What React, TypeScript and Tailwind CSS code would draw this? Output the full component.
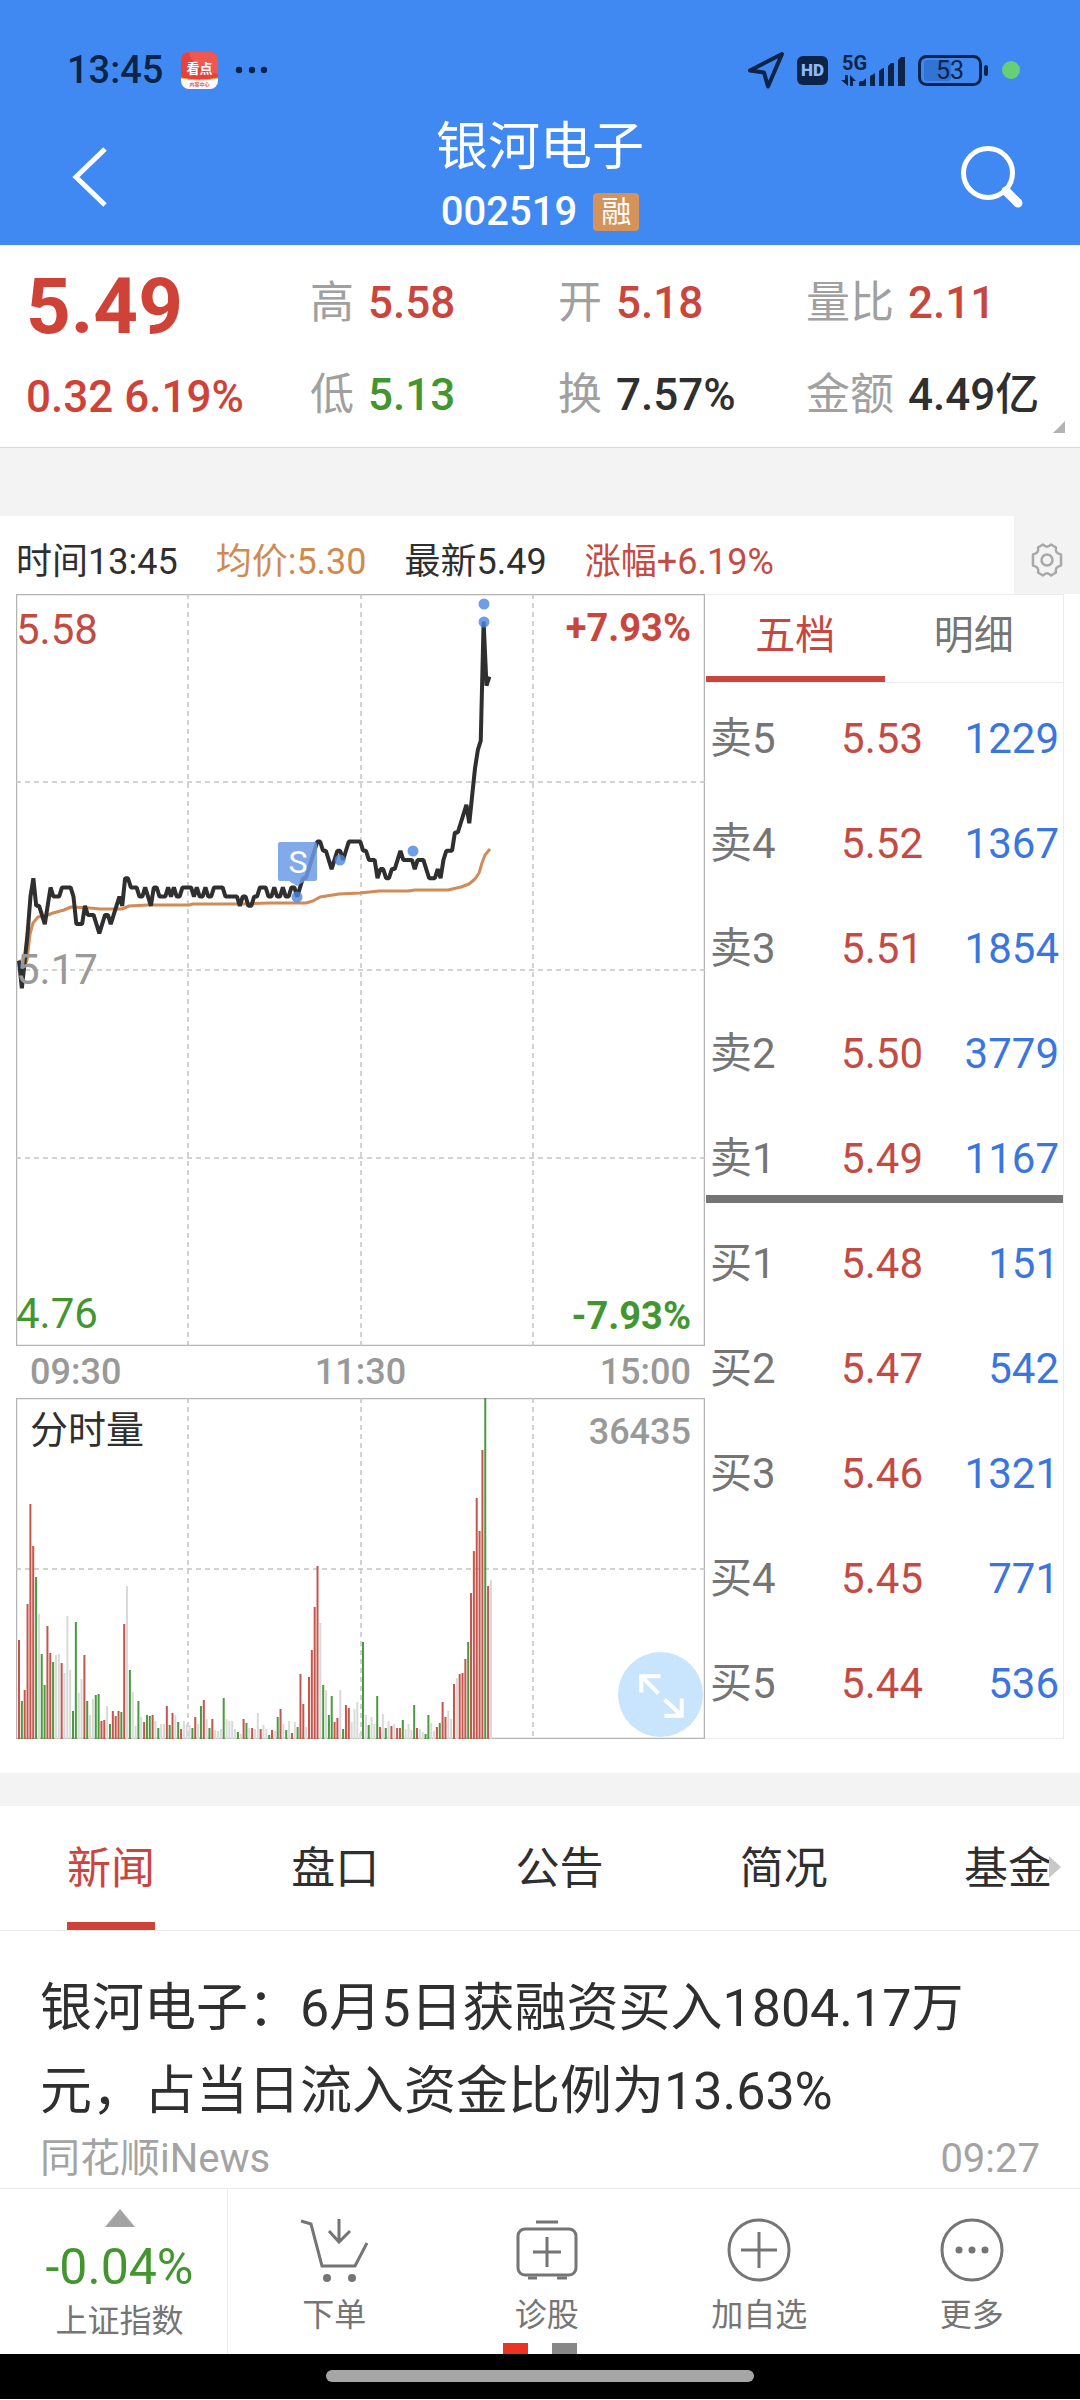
import clsx from "clsx";

// Last price per minute since 09:30, in cents
const PRICES = [
  518, 515, 518, 521, 525, 527, 524, 524, 523, 522, 524, 526, 525, 525, 525, 526, 526, 526, 526, 525,
  522, 522, 522, 524, 523, 523, 523, 522, 521, 522, 523, 523, 522, 523, 524, 525, 524, 527, 527, 526,
  526, 526, 525, 525, 526, 525, 524, 526, 526, 525, 525, 525, 526, 525, 526, 525, 525, 526, 526, 526,
  526, 525, 526, 525, 525, 526, 525, 525, 526, 526, 526, 526, 525, 525, 525, 525, 525, 524, 525, 525,
  524, 524, 525, 525, 526, 526, 526, 525, 525, 526, 525, 525, 526, 525, 525, 526, 526, 525, 526, 527,
  527, 528, 529, 530, 531, 531, 530, 530, 529, 528, 529, 530, 530, 529, 530, 531, 531, 531, 531, 531,
  530, 530, 529, 529, 529, 527, 528, 528, 527, 527, 528, 528, 529, 530, 529, 529, 529, 529, 528, 529,
  529, 529, 528, 527, 527, 527, 528, 527, 529, 530, 530, 530, 532, 532, 533, 534, 535, 533, 536, 539,
  541, 542, 555, 548, 549,
];

const AVERAGE =
  "3,366 8,374 11,366 14,340 17,329 22,323 32,321 37,319 48,316 55,313 74,314 84,315 106,315 113,312 132,311 173,311 177,310 225,310 253,309 290,309 297,307 304,303 323,300 344,299 363,297 392,297 399,296 432,296 445,293 453,290 459,285 463,279 466,269 469,261 474,255";

// r = up, g = down, e = unchanged, followed by the bar height
const VOLUMES =
  "r99 g38 r49 r135 r235 r193 g162 e125 g85 g54 r113 r86 g77 e84 e85 r76 e66 e123 e69 g28 g117 e46 e60 r84 g38 e24 e40 g44 g45 r18 r19 e33 g15 r28 r23 r28 g27 r115 e153 g69 e47 e13 g38 e22 r17 g24 g23 r24 e18 g11 e15 e15 r33 g14 r26 e24 g17 r10 e18 e15 e14 g11 r22 e15 g33 r39 e20 g11 r20 e9 e8 e10 g41 e20 e18 e18 e10 g7 e5 r20 g16 e11 r11 e10 e26 r10 e14 e10 g4 r9 e8 g22 r30 e15 g9 e18 r6 e17 g12 r65 r35 e12 r62 r89 r132 r173 e116 g54 e49 g24 g43 r17 r21 e49 g10 r34 r31 e17 e30 e37 e6 g97 e24 g14 e22 e15 g43 r12 e25 g11 e18 r13 e15 r11 r11 g19 e10 e15 e9 g34 r11 e10 e7 g5 g24 e16 e8 r12 g16 r37 r22 e28 e20 r55 e61 r65 r66 r80 g97 r146 r188 r241 r208 r289 g341 r153 e159";

const BAR_COLORS = { r: "#c4564d", g: "#4a9a40", e: "#d9d9d9" };

const MARKS = [
  [468, 10],
  [468, 28],
  [281, 303],
  [324, 266],
  [397, 257],
];

const QUOTES = [
  { label: "高", value: "5.58", color: "text-[#c9463e]" },
  { label: "开", value: "5.18", color: "text-[#c9463e]" },
  { label: "量比", value: "2.11", color: "text-[#c9463e]" },
  { label: "低", value: "5.13", color: "text-[#43962f]" },
  { label: "换", value: "7.57%", color: "text-[#2f2f2f]" },
  { label: "金额", value: "4.49亿", color: "text-[#2f2f2f]" },
];

const ORDERS = [
  { label: "卖5", price: "5.53", volume: "1229" },
  { label: "卖4", price: "5.52", volume: "1367" },
  { label: "卖3", price: "5.51", volume: "1854" },
  { label: "卖2", price: "5.50", volume: "3779" },
  { label: "卖1", price: "5.49", volume: "1167" },
  { label: "买1", price: "5.48", volume: "151" },
  { label: "买2", price: "5.47", volume: "542" },
  { label: "买3", price: "5.46", volume: "1321" },
  { label: "买4", price: "5.45", volume: "771" },
  { label: "买5", price: "5.44", volume: "536" },
];

const TABS = ["新闻", "盘口", "公告", "简况", "基金"];

function StatusBar() {
  return (
    <div className="flex items-center justify-between pt-12 pr-[60px] pl-[67px] text-[#0c2447]">
      <div className="flex items-center">
        <span className="text-[38px] leading-[44px] font-medium">13:45</span>
        <svg className="ml-[18px] h-[37px] w-[37px]" viewBox="0 0 37 37">
          <clipPath id="app-icon">
            <rect width="37" height="37" rx="8" />
          </clipPath>
          <g clipPath="url(#app-icon)">
            <rect width="37" height="37" fill="#e8413a" />
            <path d="M8 0C9 10 20 20 37 22V0Z" fill="#f0574e" />
            <path d="M0 26Q18 30 37 26V37H0Z" fill="#fff" />
            <path d="M0 26Q18 30 37 26" fill="none" stroke="#f6b04c" />
          </g>
          <text x="18.500" y="21" textAnchor="middle" fontSize="13" fontWeight="700" fill="#fff">
            看点
          </text>
          <text x="18.500" y="34" textAnchor="middle" fontSize="5" fontWeight="700" fill="#d8584e">
            内容中心
          </text>
        </svg>
        <svg className="ml-[17px] h-2 w-8" viewBox="0 0 32 8" fill="currentColor">
          <circle cx="4" cy="4" r="3.200" />
          <circle cx="17" cy="4" r="3.200" />
          <circle cx="29" cy="4" r="3.200" />
        </svg>
      </div>
      <div className="flex items-center gap-[13px]">
        <svg className="h-[37px] w-9" viewBox="0 0 36 37">
          <path
            d="M34 2L2 18.500L16 20.500L20 34.500Z"
            fill="none"
            stroke="currentColor"
            strokeWidth="4"
            strokeLinejoin="round"
          />
        </svg>
        <span className="w-[31px] rounded-md bg-[#0c2447] text-center text-[17px] leading-[29px] font-black text-[#8fb9f7]">
          HD
        </span>
        <svg className="h-[38px] w-16" viewBox="0 0 64 38" fill="currentColor">
          <text x="1" y="19" fontSize="20" fontWeight="700">
            5G
          </text>
          <path d="M4 24h3v11L0 29h4zM9 35V24l6 6h-3v5z" />
          <path d="M18 35v-3q0-2 2-2h2l3-3v8zM29 35v-9q0-2 2-2l3-2v13zM38 35V20l4-3h1v18zM47 35V15l3-3h3v23zM57 35V9l3-3h4v29z" />
        </svg>
        <svg className="h-[31px] w-[71px]" viewBox="0 0 71 31">
          <rect x="1.500" y="1.500" width="61" height="28" rx="7" fill="none" stroke="currentColor" strokeWidth="3" />
          <rect x="6" y="5" width="27" height="21" rx="3" fill="#3273d6" />
          <rect x="66" y="10" width="4" height="11" rx="2" fill="currentColor" />
          <text x="32" y="24" textAnchor="middle" fontSize="25" fill="currentColor">
            53
          </text>
        </svg>
        <span className="h-[18px] w-[18px] rounded-full bg-[#67d077]" />
      </div>
    </div>
  );
}

function Header() {
  return (
    <header className="bg-[#4189f2]">
      <StatusBar />
      <div className="grid grid-cols-[1fr_auto_1fr] items-center px-14 pt-4 text-white">
        <button type="button" aria-label="返回" className="justify-self-start pl-4">
          <svg className="h-[62px] w-9" viewBox="0 0 36 62" fill="none" stroke="currentColor" strokeWidth="5">
            <path d="M33 3L4 31L33 59" />
          </svg>
        </button>
        <div className="pt-2 pb-[13px] text-center">
          <h1 className="text-[52px] leading-[64px]">银河电子</h1>
          <div className="mt-3 flex items-center justify-center gap-4">
            <span className="text-[40px] leading-10 font-medium">002519</span>
            <span className="rounded-sm bg-[#d4935a] px-2 text-[30px] leading-[38px]">融</span>
          </div>
        </div>
        <button type="button" aria-label="搜索" className="justify-self-end">
          <svg className="h-16 w-16" viewBox="0 0 64 64" fill="none" stroke="currentColor" strokeLinecap="round">
            <circle cx="28" cy="28" r="24.500" strokeWidth="5" />
            <path d="M46 46L58 58" strokeWidth="9" />
          </svg>
        </button>
      </div>
    </header>
  );
}

function QuoteSummary() {
  return (
    <section className="relative flex border-b border-[#dadada] bg-white pt-3 pb-1.5 pl-[26px]">
      <div className="w-[284px] shrink-0 text-[#cf4238]">
        <div className="text-[78px] leading-[100px] font-bold">5.49</div>
        <div className="text-[44px] leading-20 font-medium whitespace-nowrap">0.32 6.19%</div>
      </div>
      <dl className="grid flex-1 grid-cols-[248fr_248fr_274fr]">
        {QUOTES.map((quote) => (
          <div key={quote.label} className="flex gap-3.5 text-[44px] leading-[92px] whitespace-nowrap">
            <dt className="text-[#a0a0a0]">{quote.label}</dt>
            <dd className={clsx("font-medium", quote.color)}>{quote.value}</dd>
          </div>
        ))}
      </dl>
      <svg className="absolute right-[15px] bottom-3.5 h-3 w-3" viewBox="0 0 12 12">
        <path d="M12 0V12H0Z" fill="#b3b3b3" />
      </svg>
    </section>
  );
}

function ChartInfo() {
  return (
    <div className="flex bg-white text-[36px] text-[#2f2f2f]">
      <div className="flex flex-1 gap-[38px] pt-5 pb-1.5 pl-4 leading-[52px] whitespace-nowrap">
        <span>时间13:45</span>
        <span className="text-[#cf8a50]">均价:5.30</span>
        <span>最新5.49</span>
        <span className="text-[#c44b43]">涨幅+6.19%</span>
      </div>
      <button type="button" aria-label="设置" className="flex w-[66px] justify-center bg-[#f3f3f3] pt-[26px]">
        <svg className="h-9 w-9" viewBox="0 0 36 36" fill="none" stroke="#a8a8a8" strokeWidth="2.500">
          <path
            d="M14 2.500Q18 7 22 2.500L27 5.500Q25.500 11 32 12.500V23.500Q25.500 25 27 30.500L22 33.500Q18 29 14 33.500L9 30.500Q10.500 25 4 23.500V12.500Q10.500 11 9 5.500Z"
            strokeLinejoin="round"
          />
          <circle cx="18" cy="18" r="5.500" />
        </svg>
      </button>
    </div>
  );
}

function PriceChart() {
  const line = PRICES.map((price, i) => `${3 + i * 2.868},${(558 - price) * 9.17}`).join(" ");

  return (
    <div className="relative text-[42px] leading-[48px]">
      <svg className="block w-full" viewBox="0 0 689 752">
        <rect x="0.500" y="0.500" width="688" height="751" fill="none" stroke="#b4b4b4" strokeWidth="1.500" />
        <path
          d="M0 188H689M0 376H689M0 564H689M172 0V752M345 0V752M517 0V752"
          fill="none"
          stroke="#c4c4c4"
          strokeWidth="1.500"
          strokeDasharray="5 4"
        />
        <polyline points={AVERAGE} fill="none" stroke="#d08b57" strokeWidth="3" strokeLinejoin="round" />
        <polyline points={line} fill="none" stroke="#2f2f2f" strokeWidth="4" strokeLinejoin="bevel" />
        {MARKS.map(([x, y]) => (
          <circle key={y} cx={x} cy={y} r="5.500" fill="#4c86e0" fillOpacity="0.8" />
        ))}
        <path
          d="M264 248H299Q301 248 301 250V285Q301 287 299 287H289L281 292L273 287H264Q262 287 262 285V250Q262 248 264 248Z"
          fill="#6c9be8"
          fillOpacity="0.85"
        />
        <text x="282" y="279" textAnchor="middle" fontSize="32" fill="#fff">
          S
        </text>
      </svg>
      <span className="absolute top-3 left-0 text-[#c44b43]">5.58</span>
      <span className="absolute top-1/2 left-0 -translate-y-1/2 text-[#999]">5.17</span>
      <span className="absolute bottom-2 left-0 text-[#43962f]">4.76</span>
      <span className="absolute top-2.5 right-3.5 text-[38px] font-bold text-[#c9463e]">+7.93%</span>
      <span className="absolute right-3.5 bottom-1.5 text-[38px] font-bold text-[#43962f]">-7.93%</span>
    </div>
  );
}

function VolumeChart() {
  return (
    <div className="relative">
      <svg className="block w-full" viewBox="0 0 689 341">
        <rect x="0.500" y="0.500" width="688" height="340" fill="none" stroke="#b4b4b4" strokeWidth="1.500" />
        <path
          d="M0 171H689M172 0V341M345 0V341M517 0V341"
          fill="none"
          stroke="#c4c4c4"
          strokeWidth="1.500"
          strokeDasharray="5 4"
        />
        {VOLUMES.split(" ").map((bar, i) => {
          const height = Number(bar.slice(1));
          return (
            <rect
              key={i}
              x={2 + i * 2.843}
              y={341 - height}
              width="2"
              height={height}
              fill={BAR_COLORS[bar[0] as keyof typeof BAR_COLORS]}
            />
          );
        })}
      </svg>
      <span className="absolute top-2 left-3.5 text-[38px] leading-[48px] text-[#2f2f2f]">分时量</span>
      <span className="absolute top-2.5 right-3.5 text-[36px] leading-[48px] font-medium text-[#999]">36435</span>
      <button type="button" aria-label="全屏" className="absolute right-0.5 bottom-0.5 rounded-full bg-[#c8e5fd]">
        <svg className="h-[85px] w-[85px]" viewBox="0 0 84 84" fill="none" stroke="#fff" strokeWidth="4">
          <path d="M23 40V24H42M24 25L40 41M63 46V63H46M62 62L46 47" />
        </svg>
      </button>
    </div>
  );
}

function OrderBook() {
  return (
    <div className="border border-l-0 border-[#ececec] pl-px">
      <div className="grid grid-cols-2 border-b border-[#ececec] text-[40px] leading-[81px]">
        <button type="button" className="border-b-6 border-[#c9463e] text-[#c9463e]">
          五档
        </button>
        <button type="button" className="border-b-6 border-transparent text-[#757575]">
          明细
        </button>
      </div>
      <div className="pt-[3px] pb-0.5">
        <table className="w-full text-[42px] leading-[105px]">
          <tbody>
            {ORDERS.map((order) => (
              <tr
                key={order.label}
                className={clsx(order.label === "卖1" && "shadow-[inset_0_-8px_0_#fff,inset_0_-16px_0_#757575]")}
              >
                <th scope="row" className="p-0 pl-1 text-left font-normal text-[#757575]">
                  {order.label}
                </th>
                <td className="p-0 text-right text-[#c44b43]">{order.price}</td>
                <td className="w-[140px] p-0 pr-1 text-right text-[#3b75de]">{order.volume}</td>
              </tr>
            ))}
          </tbody>
        </table>
      </div>
    </div>
  );
}

function News() {
  return (
    <section className="bg-white">
      <nav className="relative flex justify-between border-b border-[#e8e8e8] pr-7 pl-[67px] text-[44px] leading-[106px]">
        {TABS.map((tab, i) => (
          <button
            key={tab}
            type="button"
            className={clsx("border-b-8 pt-2.5", i === 0 ? "border-[#cf4238] text-[#c9463e]" : "border-transparent text-[#2f2f2f]")}
          >
            {tab}
          </button>
        ))}
        <svg className="absolute top-[50px] right-[19px] h-[22px] w-3" viewBox="0 0 12 22">
          <path d="M0 0L12 11L0 22Z" fill="#c8c8c8" />
        </svg>
      </nav>
      <article className="px-10 pt-9 pb-[3px]">
        <h2 className="text-[52px] leading-[83px] text-[#2f2f2f]">
          <a href="#">银河电子：6月5日获融资买入1804.17万元，占当日流入资金比例为13.63%</a>
        </h2>
        <div className="flex justify-between text-[40px] leading-[52px] text-[#a3a3a3]">
          <span>同花顺iNews</span>
          <time>09:27</time>
        </div>
      </article>
    </section>
  );
}

const ACTIONS = [
  {
    label: "下单",
    icon: (
      <>
        <path d="M1 4L11 7L22 49H55L67 26M39 2V24M29 14L39 25L50 14" />
        <circle cx="27" cy="61" r="4" fill="#757575" stroke="none" />
        <circle cx="52" cy="61" r="4" fill="#757575" stroke="none" />
      </>
    ),
  },
  {
    label: "诊股",
    icon: (
      <>
        <rect x="5" y="12" width="58" height="46" rx="7" />
        <path d="M23 5H45M34 20V50M20 35H48M15 61H24M44 61H54" />
      </>
    ),
  },
  {
    label: "加自选",
    icon: (
      <>
        <circle cx="34" cy="33" r="30" />
        <path d="M34 15V51M16 33H52" />
      </>
    ),
  },
  {
    label: "更多",
    icon: (
      <>
        <circle cx="34" cy="33" r="30" />
        <g fill="#757575" stroke="none">
          <circle cx="21" cy="33" r="3.500" />
          <circle cx="34" cy="33" r="3.500" />
          <circle cx="47" cy="33" r="3.500" />
        </g>
      </>
    ),
  },
];

function BottomNav() {
  return (
    <nav className="relative grid grid-cols-[228px_repeat(4,1fr)] border-t border-[#e8e8e8] bg-white pr-0.5 text-[32px] leading-10 text-[#757575]">
      <button type="button" className="flex flex-col items-center border-r border-[#ececec] pt-5 pb-[13px] pl-3">
        <svg className="h-[18px] w-[30px]" viewBox="0 0 30 18">
          <path d="M15 0L30 18H0Z" fill="#a3a3a3" />
        </svg>
        <span className="mt-3 text-[50px] leading-[56px] text-[#43962f]">-0.04%</span>
        <span className="mt-1.5">上证指数</span>
      </button>
      {ACTIONS.map((action) => (
        <button key={action.label} type="button" className="flex flex-col items-center pt-7">
          <svg className="h-[66px] w-[68px]" viewBox="0 0 68 66" fill="none" stroke="#757575" strokeWidth="3">
            {action.icon}
          </svg>
          <span className="mt-3">{action.label}</span>
        </button>
      ))}
      <div className="absolute bottom-0 left-1/2 flex -translate-x-1/2 gap-6">
        <span className="h-[11px] w-[25px] bg-[#ea3323]" />
        <span className="h-[11px] w-[25px] bg-[#878787]" />
      </div>
    </nav>
  );
}

export default function App() {
  return (
    <div className="bg-[#f3f3f3] font-['Roboto','Noto_Sans_CJK_SC',sans-serif]">
      <Header />
      <main>
        <QuoteSummary />
        <section className="mt-[68px] mb-[33px] bg-white pb-[34px]">
          <ChartInfo />
          <div className="grid grid-cols-[689fr_359fr] px-4">
            <div>
              <PriceChart />
              <div className="flex justify-between px-3.5 text-[36px] leading-[52px] font-medium text-[#999]">
                <span>09:30</span>
                <span>11:30</span>
                <span>15:00</span>
              </div>
              <VolumeChart />
            </div>
            <OrderBook />
          </div>
        </section>
        <News />
      </main>
      <BottomNav />
      <div className="flex justify-center bg-black pt-4 pb-[17px]">
        <span className="h-3 w-[428px] rounded-full bg-[#a6a6a6]" />
      </div>
    </div>
  );
}
